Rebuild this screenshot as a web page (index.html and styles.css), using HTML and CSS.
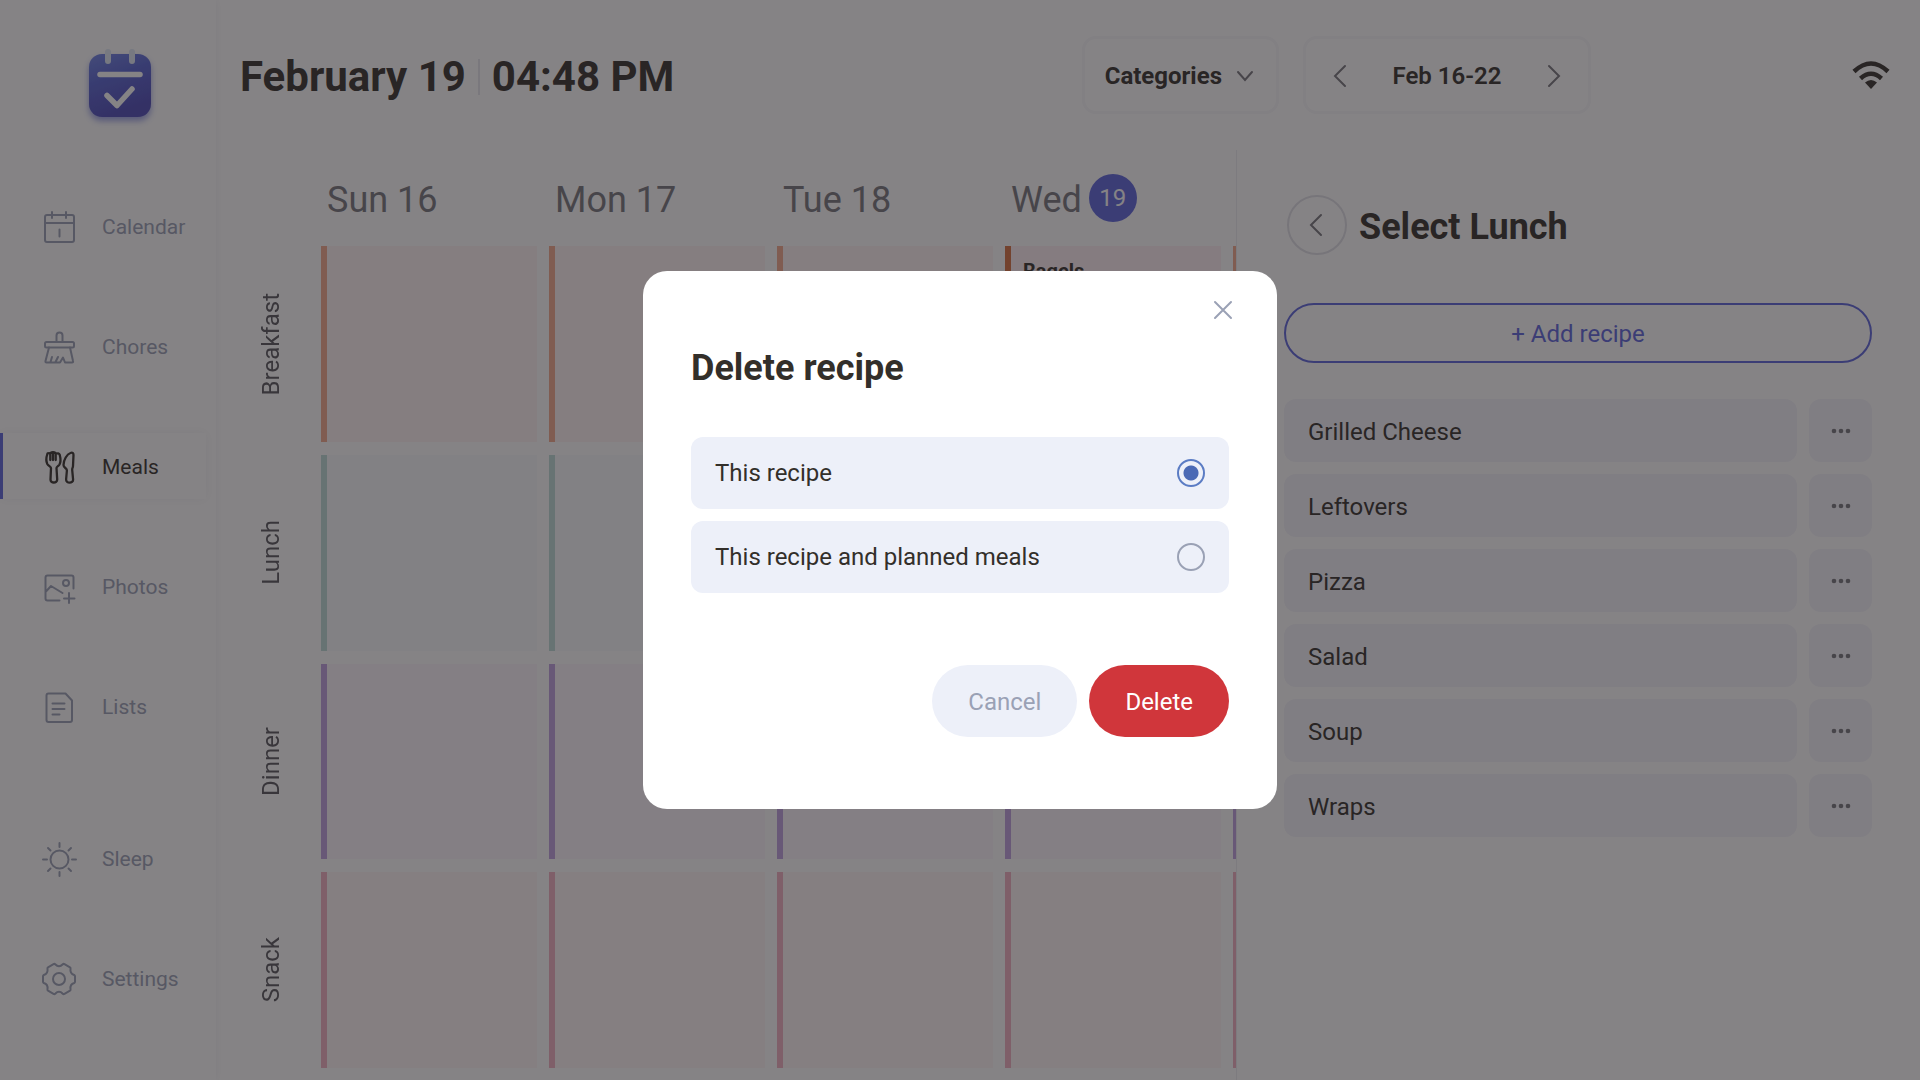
FILE: index.html
```html
<!DOCTYPE html>
<html lang="en">
<head>
<meta charset="utf-8">
<meta name="viewport" content="width=device-width, initial-scale=1">
<title>Meals</title>
<link rel="stylesheet" href="styles.css">
</head>
<body>
<div class="app">
  <aside class="sidebar">
    <svg class="logo" viewBox="0 0 80 84" aria-hidden="true">
      <defs>
        <linearGradient id="logo-fill" x1="0" y1="0" x2="0.35" y2="1"><stop offset="0" stop-color="#6f84e6"/><stop offset="0.45" stop-color="#5662d2"/><stop offset="1" stop-color="#4d4ab8"/></linearGradient>
        <filter id="logo-shadow" x="-20%" y="-20%" width="140%" height="150%"><feDropShadow dx="0" dy="4" stdDeviation="3" flood-color="#5662d2" flood-opacity="0.6"/></filter>
      </defs>
      <rect x="9" y="10" width="62" height="63" rx="13" fill="url(#logo-fill)" filter="url(#logo-shadow)"/>
      <path d="M28 8v9M52 8v9" stroke="#dfe8f6" stroke-width="6" stroke-linecap="round"/>
      <path d="M20 30.500h40" stroke="#fff" stroke-width="5.500" stroke-linecap="round"/>
      <path d="M27 51.500l10 10 15-16.500" fill="none" stroke="#fff" stroke-width="5.500" stroke-linecap="round" stroke-linejoin="round"/>
    </svg>
    <nav class="nav">
      <a class="nav-item" href="#calendar"><svg class="icon" viewBox="0 0 36 36"><rect x="4" y="6" width="29" height="27" rx="2"/><path d="M4 14h29M11 3v6M25 3v6M18.500 20.500v7"/></svg>Calendar</a>
      <a class="nav-item" href="#chores"><svg class="icon" viewBox="0 0 36 36"><path d="M15.500 13V6.500a3 3 0 0 1 6 0V13"/><rect x="4" y="13" width="29" height="5.500" rx="1.500"/><path d="M8 18.500L4.500 32q-.3 1.500 1 1.500H19l3-5 2 5h7q1.500 0 1-1.500L29 18.500M11 28l-1.500 5M17 28l-2.500 5"/></svg>Chores</a>
      <a class="nav-item active" href="#meals" aria-current="page"><svg class="icon" viewBox="0 0 36 36"><path d="M12 4v7M6.500 4.500q2.500-1 2.800 1V11M9.300 4q2.700-1.500 5.400 0V11M14.700 5q3-1.500 4 .8c.8 3 1.300 7-.2 9.700-1 1.600-3 2-3 3.500l.7 11.500c.2 4-7 4-6.700 0L10 19c0-1.500-2.500-2-3.700-4-1.500-3-1-7 .2-10.500M29.500 4c2-.8 3 .2 3 2L32 17c-.1 2-1 2-.8 4l.9 9.500c.2 4.300-7.200 4-7 0l.8-9c.2-2.500-3.400-2.500-3.400-5.500C22.500 11 26 5 29.500 4z" stroke-width="2.300"/></svg>Meals</a>
      <a class="nav-item" href="#photos"><svg class="icon" viewBox="0 0 36 36"><path d="M18.500 31.500H6.500a2 2 0 0 1-2-2V8.500a2 2 0 0 1 2-2h24a2 2 0 0 1 2 2V19.500M4.500 23l5.500-6 11.500 7M28 24v10M23 29.500h10.500"/><circle cx="25" cy="14" r="3"/></svg>Photos</a>
      <a class="nav-item" href="#lists"><svg class="icon" viewBox="0 0 36 36"><path d="M7.500 4.500h17L31 11.500V31a2 2 0 0 1-2 2H7.500a2 2 0 0 1-2-2V6.500a2 2 0 0 1 2-2zM11.500 14.500h12M11.500 20h12M11.500 25.500h7"/></svg>Lists</a>
      <a class="nav-item utility" href="#sleep"><svg class="icon" viewBox="0 0 36 36"><circle cx="18.500" cy="18.500" r="9"/><path d="M18.500 2v4M18.500 31v4M2 18.500h4M31 18.500h4M7 7l2.500 2.500M27.500 27.500L30 30M7 30l2.500-2.500M27.500 9.500L30 7"/></svg>Sleep</a>
      <a class="nav-item" href="#settings"><svg class="icon" viewBox="0 0 36 36"><circle cx="18" cy="18" r="6"/><path d="M14.500 3.500q1.500 1.800 3.500 1.800t3.500-1.800q1-1 2-.4l5.500 3.200q.9.600.5 1.600c-.5 3.500.8 5.200 3.700 6.100q.8.400.8 1.300v5.400q0 .9-.8 1.300c-2.900.9-4.200 2.600-3.700 6.100q.4 1-.5 1.600l-5.500 3.200q-1 .6-2-.4-1.500-1.800-3.500-1.800t-3.500 1.800q-1 1-2 .4l-5.500-3.200q-.9-.6-.5-1.600c.5-3.500-.8-5.200-3.700-6.100q-.8-.4-.8-1.300v-5.400q0-.9.800-1.300c2.900-.9 4.200-2.600 3.700-6.100q-.4-1 .5-1.600l5.500-3.200q1-.6 2 .4z"/></svg>Settings</a>
    </nav>
  </aside>
  <main class="main">
    <header class="topbar">
      <h1 class="clock"><span>February 19</span><span class="clock-time">04:48 PM</span></h1>
      <div class="controls">
        <button class="box categories" type="button">Categories<svg class="chevron" viewBox="0 0 18 18"><path d="M2 5l7 8 7-8"/></svg></button>
        <div class="box week">
          <button class="arrow" type="button" aria-label="Previous week"><svg viewBox="0 0 24 24"><path d="M17 2L7 12l10 10"/></svg></button>
          <span>Feb 16-22</span>
          <button class="arrow" type="button" aria-label="Next week"><svg viewBox="0 0 24 24"><path d="M7 2l10 10L7 22"/></svg></button>
        </div>
      </div>
      <svg class="wifi" viewBox="0 0 38 28" aria-label="Wi-Fi"><path d="M2 10.500Q19-5.500 36 10.500M8.500 17.500q10.500-9.500 21 0" fill="none" stroke="#332f2a" stroke-width="4.500"/><path d="M13 21.500q6-5 12 0L19 28z" fill="#332f2a"/></svg>
    </header>
    <div class="content">
      <section class="planner">
        <div class="meal-names">
          <span>Breakfast</span><span>Lunch</span><span>Dinner</span><span>Snack</span>
        </div>
        <div class="days">
          <section class="day"><h2>Sun 16</h2><div class="slot breakfast"></div><div class="slot lunch"></div><div class="slot dinner"></div><div class="slot snack"></div></section>
          <section class="day"><h2>Mon 17</h2><div class="slot breakfast"></div><div class="slot lunch"></div><div class="slot dinner"></div><div class="slot snack"></div></section>
          <section class="day"><h2>Tue 18</h2><div class="slot breakfast"></div><div class="slot lunch"></div><div class="slot dinner"></div><div class="slot snack"></div></section>
          <section class="day"><h2>Wed <span class="today">19</span></h2><div class="slot breakfast planned">Bagels</div><div class="slot lunch"></div><div class="slot dinner"></div><div class="slot snack"></div></section>
          <section class="day"><h2></h2><div class="slot breakfast"></div><div class="slot lunch"></div><div class="slot dinner"></div><div class="slot snack"></div></section>
        </div>
      </section>
      <section class="panel">
        <div class="panel-head">
          <button class="back" type="button" aria-label="Back"><svg viewBox="0 0 24 24"><path d="M16 2L6 12l10 10"/></svg></button>
          <h2>Select Lunch</h2>
        </div>
        <button class="add" type="button">+ Add recipe</button>
        <ul class="recipes">
          <li><button class="recipe" type="button">Grilled Cheese</button><button class="more" type="button" aria-label="More"><svg viewBox="0 0 20 6"><circle cx="3" cy="3" r="2.300"/><circle cx="10" cy="3" r="2.300"/><circle cx="17" cy="3" r="2.300"/></svg></button></li>
          <li><button class="recipe" type="button">Leftovers</button><button class="more" type="button" aria-label="More"><svg viewBox="0 0 20 6"><circle cx="3" cy="3" r="2.300"/><circle cx="10" cy="3" r="2.300"/><circle cx="17" cy="3" r="2.300"/></svg></button></li>
          <li><button class="recipe" type="button">Pizza</button><button class="more" type="button" aria-label="More"><svg viewBox="0 0 20 6"><circle cx="3" cy="3" r="2.300"/><circle cx="10" cy="3" r="2.300"/><circle cx="17" cy="3" r="2.300"/></svg></button></li>
          <li><button class="recipe" type="button">Salad</button><button class="more" type="button" aria-label="More"><svg viewBox="0 0 20 6"><circle cx="3" cy="3" r="2.300"/><circle cx="10" cy="3" r="2.300"/><circle cx="17" cy="3" r="2.300"/></svg></button></li>
          <li><button class="recipe" type="button">Soup</button><button class="more" type="button" aria-label="More"><svg viewBox="0 0 20 6"><circle cx="3" cy="3" r="2.300"/><circle cx="10" cy="3" r="2.300"/><circle cx="17" cy="3" r="2.300"/></svg></button></li>
          <li><button class="recipe" type="button">Wraps</button><button class="more" type="button" aria-label="More"><svg viewBox="0 0 20 6"><circle cx="3" cy="3" r="2.300"/><circle cx="10" cy="3" r="2.300"/><circle cx="17" cy="3" r="2.300"/></svg></button></li>
        </ul>
      </section>
    </div>
  </main>
</div>
<div class="overlay">
  <form class="modal" role="dialog" aria-modal="true" aria-labelledby="modal-title">
    <button class="close" type="button" aria-label="Close"><svg viewBox="0 0 20 20"><path d="M2 2l16 16M18 2L2 18"/></svg></button>
    <h2 id="modal-title">Delete recipe</h2>
    <div class="options">
      <label class="option" for="scope-recipe">This recipe<input type="radio" id="scope-recipe" name="scope" checked></label>
      <label class="option" for="scope-all">This recipe and planned meals<input type="radio" id="scope-all" name="scope"></label>
    </div>
    <div class="actions">
      <button class="action cancel" type="button">Cancel</button>
      <button class="action delete" type="button">Delete</button>
    </div>
  </form>
</div>
</body>
</html>
```
FILE: styles.css
```css
:root {
  --ink: #332f2a;
  --muted: #9aa1b5;
  --blue: #5c64dc;
  --tint: #f4f4fa;
}

* { box-sizing: border-box; }

body {
  margin: 0;
  font-family: Roboto, sans-serif;
  font-size: 24px;
  line-height: 30px;
  color: var(--ink);
  background: #fff;
}

button {
  font: inherit;
  color: inherit;
  background: none;
  border: 0;
  padding: 0;
}

h1, h2 { margin: 0; }

svg { display: block; flex: none; }

.app {
  display: flex;
  min-height: 100vh;
  overflow: hidden;
}

/* Sidebar */
.sidebar {
  width: 216px;
  flex: none;
  display: flex;
  flex-direction: column;
  box-shadow: 0 0 8px rgba(40, 30, 60, 0.06);
}

.logo {
  width: 80px;
  height: 84px;
  margin: 44px 0 0 80px;
}

.nav {
  flex: 1;
  display: flex;
  flex-direction: column;
  gap: 54px;
  padding: 65px 0 69px;
}

.nav-item {
  height: 66px;
  display: flex;
  align-items: center;
  gap: 25px;
  padding: 1px 0 0 41px;
  font-size: 21px;
  color: var(--muted);
  text-decoration: none;
}

.nav-item.active {
  color: var(--ink);
  border-left: 3px solid var(--blue);
  padding-left: 38px;
  margin-right: 10px;
  box-shadow: 0 0 12px rgba(40, 30, 60, 0.05);
}

.utility { margin-top: auto; }

.icon {
  width: 36px;
  height: 36px;
  fill: none;
  stroke: currentColor;
  stroke-width: 2;
  stroke-linecap: round;
  stroke-linejoin: round;
}

/* Header */
.main {
  flex: 1;
  min-width: 0;
  display: flex;
  flex-direction: column;
}

.topbar {
  height: 150px;
  display: flex;
  align-items: center;
  padding: 0 30px 0 24px;
}

.clock {
  flex: 1;
  display: flex;
  padding-top: 4px;
  font-size: 42px;
  line-height: 36px;
  font-weight: 700;
  white-space: nowrap;
}

.clock-time {
  margin-left: 12px;
  padding-left: 12px;
  border-left: 2px solid #e6e6ee;
}

.controls {
  display: flex;
  gap: 24px;
  margin-right: 261px;
}

.box {
  height: 78px;
  display: flex;
  align-items: center;
  border: 3px solid #f8f8fa;
  border-radius: 14px;
}

.categories {
  gap: 14px;
  padding: 2px 22px 0 20px;
  font-weight: 700;
}

.week {
  width: 288px;
  justify-content: space-between;
  padding: 2px 22px 0;
  font-weight: 600;
}

.chevron, .arrow svg, .back svg, .close svg {
  fill: none;
  stroke: #77767c;
  stroke-width: 2;
  stroke-linecap: round;
}

.chevron { width: 18px; height: 18px; }
.arrow svg, .back svg { width: 24px; height: 24px; }
.wifi { width: 38px; height: 28px; }

/* Week planner */
.content {
  flex: 1;
  display: flex;
}

.planner {
  flex: 1;
  min-width: 0;
  display: flex;
  overflow: hidden;
}

.meal-names {
  width: 105px;
  flex: none;
  display: grid;
  grid-template-rows: repeat(4, 1fr);
  gap: 13px;
  padding: 96px 0 12px 5px;
  color: #57565c;
}

.meal-names span {
  writing-mode: vertical-rl;
  transform: rotate(180deg);
  place-self: center;
}

.days {
  display: flex;
  gap: 12px;
}

.day {
  width: 216px;
  flex: none;
  display: grid;
  grid-template-rows: 83px repeat(4, 1fr);
  gap: 13px;
  padding-bottom: 12px;
}

.day h2 {
  display: flex;
  align-items: center;
  gap: 7px;
  padding: 17px 0 0 6px;
  font-size: 36px;
  font-weight: 400;
  color: #77767c;
}

.today {
  width: 48px;
  height: 48px;
  display: grid;
  place-items: center;
  margin-bottom: 4px;
  border-radius: 50%;
  background: var(--blue);
  color: #fff;
  font-size: 24px;
}

.slot { border-left: 6px solid; }
.breakfast { background: #fff4f4; border-color: #f3a88c; }
.lunch { background: #f9fbfc; border-color: #bcdcd8; }
.dinner { background: #fcf7fd; border-color: #bf9fe0; }
.snack { background: #fff5f6; border-color: #f2b0c0; }

.planned {
  background: #fff0f3;
  border-color: #d8703f;
  padding: 10px 12px;
  font-size: 20px;
  font-weight: 700;
}

/* Recipe panel */
.panel {
  width: 684px;
  flex: none;
  padding: 45px 48px 45px 47px;
  border-left: 1px solid #eeeef2;
}

.panel-head {
  display: flex;
  align-items: center;
  gap: 12px;
  padding-left: 3px;
}

.panel-head h2 { padding-top: 4px; font-size: 36px; font-weight: 700; }

.back {
  width: 60px;
  height: 60px;
  display: grid;
  place-items: center;
  border: 2px solid #e0e0e6;
  border-radius: 50%;
}

.add {
  width: 100%;
  height: 60px;
  margin: 48px 0 36px;
  padding-top: 2px;
  border: 2px solid var(--blue);
  border-radius: 30px;
  color: var(--blue);
}

.recipes {
  display: grid;
  gap: 12px;
  margin: 0;
  padding: 0;
  list-style: none;
}

.recipes li { display: flex; gap: 12px; }

.recipe, .more {
  height: 63px;
  border-radius: 12px;
  background: var(--tint);
}

.recipe { flex: 1; padding: 2px 24px 0; text-align: left; }

.more {
  width: 63px;
  display: grid;
  place-items: center;
}

.more svg { width: 20px; height: 6px; fill: #77767c; }

/* Delete dialog */
.overlay {
  position: fixed;
  inset: 0;
  display: flex;
  align-items: center;
  justify-content: center;
  background: rgba(33, 29, 33, 0.55);
}

.modal {
  width: 634px;
  max-width: 100%;
  display: flex;
  flex-direction: column;
  padding: 24px 48px 72px;
  border-radius: 24px;
  background: #fff;
}

.close { align-self: flex-end; padding: 5px; margin-right: -9px; }
.close svg { width: 20px; height: 20px; stroke: var(--muted); }

.modal h2 { margin-top: 22px; font-size: 36px; line-height: 42px; font-weight: 700; }

.options { display: grid; gap: 12px; margin-top: 48px; }

.option {
  height: 72px;
  display: flex;
  align-items: center;
  justify-content: space-between;
  padding: 0 24px;
  border-radius: 12px;
  background: #edf0f9;
}

.option input {
  appearance: none;
  width: 28px;
  height: 28px;
  margin: 0;
  border: 2px solid var(--muted);
  border-radius: 50%;
}

.option input:checked {
  border-color: #5b7cc4;
  background: radial-gradient(circle, #4a69b5 7px, transparent 8px);
}

.actions {
  display: flex;
  justify-content: flex-end;
  gap: 12px;
  margin-top: 72px;
}

.action { height: 72px; padding: 2px 36px 0; border-radius: 36px; }
.cancel { background: #edf0f9; color: var(--muted); }
.delete { background: #d0363b; color: #fff; }
```
